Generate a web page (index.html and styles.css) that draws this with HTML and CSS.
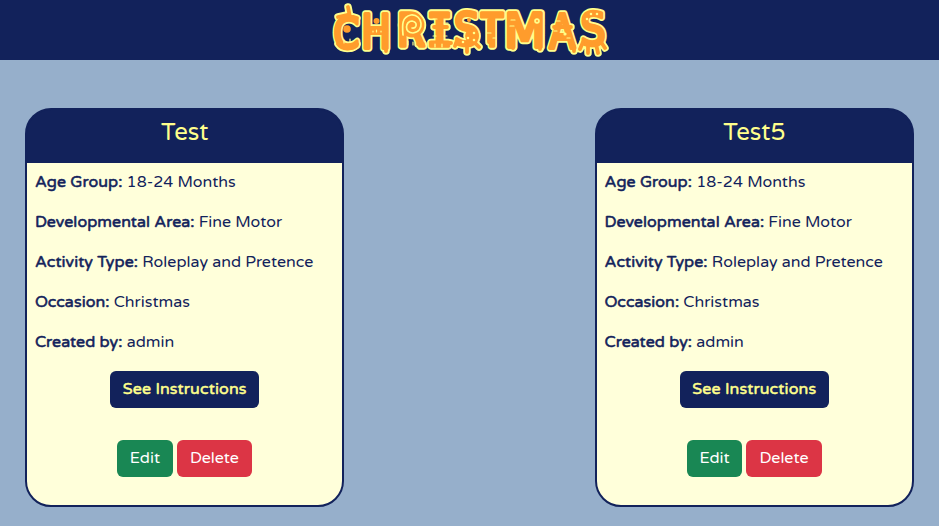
FILE: index.html
```html
<!DOCTYPE html>
<html lang="en">
<head>
<meta charset="utf-8">
<title>Christmas</title>
<link rel="stylesheet" href="styles.css">
</head>
<body>
<header class="banner">
  <svg class="wordmark" viewBox="330 0 280 60" width="280" height="60" role="img" aria-label="Christmas">
    <defs>
      <g id="word">
        <text transform="translate(333.5 48) scale(.8 .93)">C</text>
        <text transform="translate(361.3 47.5) scale(.86 1)">H</text>
        <text transform="translate(397 46) scale(.88 .98)">R</text>
        <text class="slab" transform="translate(426.5 45.5) scale(.95 .97)">I</text>
        <text transform="translate(454 45) scale(.87 .95)">S</text>
        <text transform="translate(481.5 46) scale(.76 .98)">T</text>
        <text transform="translate(504.3 46.5) scale(1.04 1)">M</text>
        <text transform="translate(549.5 48) scale(.82 1.02)">A</text>
        <text transform="translate(580.4 45) scale(.86 .95)">S</text>
        <path class="limb" d="M338 17l9-2 10 3M348 7l2 10M338 44c4 6 14 6 19 0M369 33h15M386 45v6M418 44h5M434 27h13M431 43h20M456 43l-1 3M460 44l12-1M467 47v5M475 43l4 4M489 20v22M493 20v25M513 45v3M540 44v5M554 27h17M561 21h4M558 35h12M574 46v5M583 42l-3 7M588 44v9M596 44l2 9M601 42l4 6"/>
        <circle cx="412" cy="25" r="10.5"/><circle cx="472" cy="36" r="5"/>
      </g>
    </defs>
    <use href="#word" class="halo"/>
    <use href="#word" class="fill"/>
    <g class="spots">
      <path d="M344 40v3M350 39v3M373 31v1M376.5 30v2M381 31v1M408 41v4M413 42v3M433 19h4M444 23h4M433 36h3M444 36h3M435 44v3M442 44v3M487 33h4M496 38h-3M511 20h4M510 26h4M556 21h4M554 31h3M570 38h-3"/>
      <path class="curl" d="M403 35c-1-11-1-18 8-20 12-1 14 17 2 18-9 0-8-12-1-12 6 1 5 8 0 7"/>
      <circle cx="537" cy="21" r="2.2"/><circle cx="463" cy="42" r=".7"/><circle cx="468" cy="38" r=".7"/><circle cx="474" cy="33" r=".7"/><circle cx="474" cy="40" r=".7"/><circle cx="591" cy="14" r=".7"/><circle cx="597" cy="14" r=".7"/><circle cx="587" cy="19" r=".7"/><circle cx="565" cy="34" r="1"/>
    </g>
    <g class="dots"><circle cx="347" cy="29" r="3.8"/><circle cx="376.5" cy="21" r="3"/><circle cx="537" cy="21" r="1"/><circle cx="469" cy="20" r="2"/></g>
  </svg>
</header>
<main class="cards">
  <article class="card">
    <h2 class="title">Test</h2>
    <div class="body">
      <p><b>Age Group:</b> <span>18-24 Months</span></p>
      <p><b>Developmental Area:</b> <span>Fine Motor</span></p>
      <p><b>Activity Type:</b> <span>Roleplay and Pretence</span></p>
      <p><b>Occasion:</b> <span>Christmas</span></p>
      <p><b>Created by:</b> <span>admin</span></p>
      <button class="btn see">See Instructions</button>
      <div class="actions"><button class="btn edit">Edit</button><button class="btn delete">Delete</button></div>
    </div>
  </article>
  <article class="card">
    <h2 class="title">Test5</h2>
    <div class="body">
      <p><b>Age Group:</b> <span>18-24 Months</span></p>
      <p><b>Developmental Area:</b> <span>Fine Motor</span></p>
      <p><b>Activity Type:</b> <span>Roleplay and Pretence</span></p>
      <p><b>Occasion:</b> <span>Christmas</span></p>
      <p><b>Created by:</b> <span>admin</span></p>
      <button class="btn see">See Instructions</button>
      <div class="actions"><button class="btn edit">Edit</button><button class="btn delete">Delete</button></div>
    </div>
  </article>
</main>
</body>
</html>
```
FILE: styles.css
```css
* { box-sizing: border-box; }
body { margin: 0; height: 526px; overflow: hidden; background: #96afcb; color: #12225b; font: 16px/24px "Varela Round", "Noto Sans", sans-serif; }
.banner { height: 60px; background: #12225b; display: flex; justify-content: center; }
.wordmark { display: block; }
.wordmark text { font: 46px "DejaVu Sans", sans-serif; }
.wordmark .slab { font-family: "DejaVu Sans Mono", monospace; }
.limb { fill: none; }
.halo { fill: #ffff8c; stroke: #ffff8c; stroke-width: 7.5px; stroke-linejoin: round; stroke-linecap: round; }
.fill { fill: #ff9c2c; stroke: #ff9c2c; stroke-width: 3.8px; stroke-linejoin: round; stroke-linecap: round; }
.spots { fill: #ffff8c; stroke: #ffff8c; stroke-width: 1.2px; stroke-linecap: round; }
.curl { fill: none; stroke-width: 1.7px; }
.dots { fill: #ff9c2c; }
.cards { display: flex; justify-content: space-between; padding: 48.4px 25px 0 25px; }
.card { width: 319.4px; height: 399px; border: 2px solid #12225b; border-radius: 26px; background: linear-gradient(#12225b 52px, #ffffda 52px); overflow: hidden; }
.title { margin: 0; height: 52.6px; padding-top: 7px; background: #12225b; color: #ffff8c; font-size: 24px; line-height: 32px; font-weight: 400; text-align: center; }
.body { padding: 7px 8px 0; display: flex; flex-direction: column; align-items: center; }
p { margin: 0 0 16px; align-self: stretch; white-space: nowrap; letter-spacing: .02px; }
b { font-weight: 400; letter-spacing: .06px; -webkit-text-stroke: .55px #12225b; }
.btn { height: 37px; border: 0; border-radius: 6px; padding: 0 0 1px; font: inherit; color: #fff; white-space: nowrap; }
.see { width: 149px; margin-top: 1px; background: #12225b; color: #ffff8c; letter-spacing: .14px; -webkit-text-stroke: .5px #ffff8c; }
.actions { display: flex; gap: 4px; margin-top: 32.5px; }
.edit { width: 55.5px; background: #198754; }
.delete { width: 75.5px; background: #dc3545; }
```
